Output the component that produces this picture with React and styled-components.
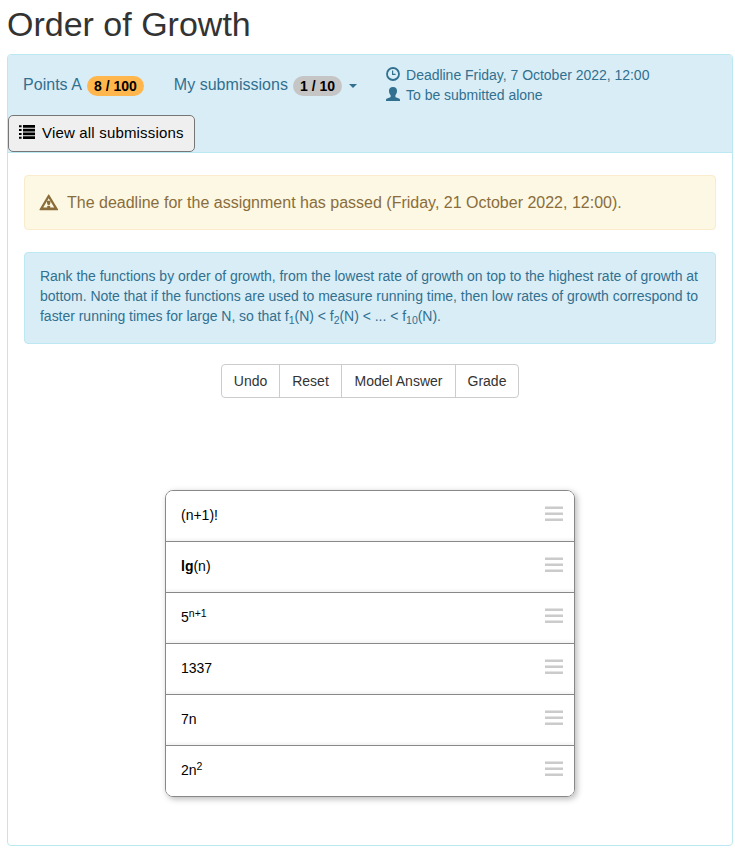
import React from "react";
import styled, { createGlobalStyle } from "styled-components";

const Global = createGlobalStyle`
  * { box-sizing: border-box; }
  body {
    margin: 0;
    background: #fff;
    color: #333;
    font: 14px/20px "Liberation Sans", Arial, sans-serif;
  }
  sub, sup {
    position: relative;
    font-size: 75%;
    line-height: 0;
    vertical-align: baseline;
  }
  sup { top: -0.5em; }
  sub { bottom: -0.25em; }
`;

const Page = styled.main`
  width: 735px;
  height: 855px;
  padding: 5px 2px 0 7px;
  overflow: hidden;
`;

const Title = styled.h1`
  margin: 0 0 10px;
  font-size: 34px;
  font-weight: 400;
  line-height: 39px;
`;

const Panel = styled.section`
  height: 792px;
  border: 1px solid #bce8f1;
  border-radius: 4px;
`;

const Header = styled.header`
  height: 98px;
  background: #d9edf7;
  border-bottom: 1px solid #bce8f1;
  border-radius: 3px 3px 0 0;
  color: #31708f;
`;

const Nav = styled.div`
  display: flex;
  height: 60px;
`;

const NavItem = styled.div`
  display: flex;
  align-items: center;
  height: 60px;
  padding: 0 15px;
  font-size: 16px;
  letter-spacing: 0.03px;
  white-space: nowrap;
`;

const Badge = styled.span`
  height: 20px;
  margin: 2px 0 0 5px;
  padding: 0 7px;
  border-radius: 10px;
  background: ${(p) => (p.$warm ? "#ffb74d" : "#c5c5c5")};
  color: #000;
  font-size: 14px;
  font-weight: 700;
  letter-spacing: 0;
  line-height: 20px;
`;

const Caret = styled.span`
  margin: 2px 0 0 7px;
  border-top: 4px solid #31708f;
  border-left: 4px solid transparent;
  border-right: 4px solid transparent;
`;

const Details = styled.div`
  padding: 10px 0 0 14px;
`;

const Detail = styled.div`
  display: flex;
  height: 20px;
  gap: 6px;
  letter-spacing: -0.02px;

  svg { margin-top: 2px; }
`;

const ViewButton = styled.button`
  display: flex;
  align-items: center;
  gap: 7px;
  width: 187px;
  height: 37px;
  padding: 0 10px 2px;
  border: 1px solid #767676;
  border-radius: 5px;
  background: #efefef;
  color: #000;
  font: 15px/20px "Liberation Sans", Arial, sans-serif;
  letter-spacing: 0.18px;
  white-space: nowrap;

  svg { flex: none; margin-top: -2px; }
`;

const Body = styled.div`
  padding: 22px 16px 0;
`;

const Alert = styled.div`
  border: 1px solid ${(p) => (p.$warning ? "#faebcc" : "#bce8f1")};
  border-radius: 4px;
  background: ${(p) => (p.$warning ? "#fcf8e3" : "#d9edf7")};
  color: ${(p) => (p.$warning ? "#8a6d3b" : "#31708f")};
`;

const Warning = styled(Alert)`
  display: flex;
  align-items: center;
  gap: 8px;
  height: 55px;
  padding: 0 14px;
  font-size: 16px;
`;

const Info = styled(Alert)`
  height: 92px;
  margin-top: 22px;
  padding: 13px 0 0 15px;
  letter-spacing: -0.025px;
  white-space: nowrap;
`;

const Actions = styled.div`
  display: flex;
  width: 298px;
  margin: 20px auto 0;
  border: 1px solid #ccc;
  border-radius: 4px;
`;

const Action = styled.button`
  flex: 0 0 ${(p) => p.$width}px;
  height: 32px;
  padding: 0;
  border: 0;
  background: none;
  color: #333;
  font: 14px/20px "Liberation Sans", Arial, sans-serif;

  & + & { border-left: 1px solid #ccc; }
`;

const List = styled.ul`
  width: 410px;
  margin: 92px auto 0;
  padding: 0;
  border: 1px solid #888;
  border-radius: 8px;
  box-shadow: 2px 2px 6px rgba(0, 0, 0, 0.28);
  list-style: none;
  overflow: hidden;
`;

const Item = styled.li`
  display: flex;
  justify-content: space-between;
  height: 51px;
  padding: 14px 11px 0 15px;
  background: linear-gradient(#fff 46px, #f3f3f3 50px);
  color: #000;

  &:not(:last-child) { border-bottom: 1px solid #888; }
  &:last-child { height: 50px; background: #fff; }
`;

const Grip = styled.span`
  width: 18px;
  height: 15px;
  margin-top: 1px;
  background: repeating-linear-gradient(#e4e4e4 0 1px, #cbcbcb 1px 3px, transparent 3px 6px);
`;

const ClockIcon = () => (
  <svg width="14" height="14" viewBox="0 0 14 14" fill="none" stroke="currentColor">
    <circle cx="7" cy="7" r="6" strokeWidth="1.8" />
    <path d="M6.600 3.400v4h3" strokeWidth="1.2" />
  </svg>
);

const UserIcon = () => (
  <svg width="14" height="14" viewBox="0 0 14 14" fill="currentColor">
    <path d="M7 0C4.300 0 3 1.500 3 3.800c0 2 .6 3.400 1.600 4.500v1.400c0 .4-.3.7-.9.9L1 11.600C.3 11.900 0 12.300 0 13v1h14v-1c0-.7-.3-1.100-1-1.400l-2.700-1c-.6-.2-.9-.5-.9-.9V8.300c1-1.100 1.600-2.500 1.600-4.500C11 1.500 9.700 0 7 0Z" />
  </svg>
);

const ListIcon = () => (
  <svg width="16" height="14" viewBox="0 0 16 14" fill="currentColor">
    <path d="M0 .2h2.600v2H0zM4 0h12v2.700H4zM0 4.100h2.600v2H0zM4 3.800h12v2.700H4zM0 8h2.600v2H0zM4 7.600h12v2.700H4zM0 11.700h2.600v2H0zM4 11.300h12V14H4z" />
  </svg>
);

const WarningIcon = () => (
  <svg width="20" height="17" viewBox="0 0 20 17" fill="currentColor">
    <path fillRule="evenodd" d="M9.200.7q.5-.8 1 0L19 15.200q.4 1-.7 1H1.300q-1.100 0-.7-1ZM9.700 4.200 4.200 13.600h11Z" />
    <path d="M8 6.700h3.400v2.300l-.9 2.300H8.900L8 9zM8.200 12h3v2h-3z" />
  </svg>
);

const functions = [
  <>(n+1)!</>,
  <><b>lg</b>(n)</>,
  <>5<sup>n+1</sup></>,
  <>1337</>,
  <>7n</>,
  <>2n<sup>2</sup></>,
];

const actions = [
  ["Undo", 57],
  ["Reset", 62],
  ["Model Answer", 114],
  ["Grade", 63],
];

export default function App() {
  return (
    <Page>
      <Global />
      <Title>Order of Growth</Title>
      <Panel>
        <Header>
          <Nav>
            <NavItem>Points A <Badge $warm>8 / 100</Badge></NavItem>
            <NavItem>My submissions <Badge>1 / 10</Badge><Caret /></NavItem>
            <Details>
              <Detail><ClockIcon />Deadline Friday, 7 October 2022, 12:00</Detail>
              <Detail><UserIcon />To be submitted alone</Detail>
            </Details>
          </Nav>
          <ViewButton><ListIcon />View all submissions</ViewButton>
        </Header>
        <Body>
          <Warning $warning>
            <WarningIcon />
            The deadline for the assignment has passed (Friday, 21 October 2022, 12:00).
          </Warning>
          <Info>
            Rank the functions by order of growth, from the lowest rate of growth on top to the highest rate of growth at<br />
            bottom. Note that if the functions are used to measure running time, then low rates of growth correspond to<br />
            faster running times for large N, so that f<sub>1</sub>(N) &lt; f<sub>2</sub>(N) &lt; ... &lt; f<sub>10</sub>(N).
          </Info>
          <Actions>
            {actions.map(([label, width]) => (
              <Action key={label} $width={width}>{label}</Action>
            ))}
          </Actions>
          <List>
            {functions.map((label, i) => (
              <Item key={i}><span>{label}</span><Grip /></Item>
            ))}
          </List>
        </Body>
      </Panel>
    </Page>
  );
}
